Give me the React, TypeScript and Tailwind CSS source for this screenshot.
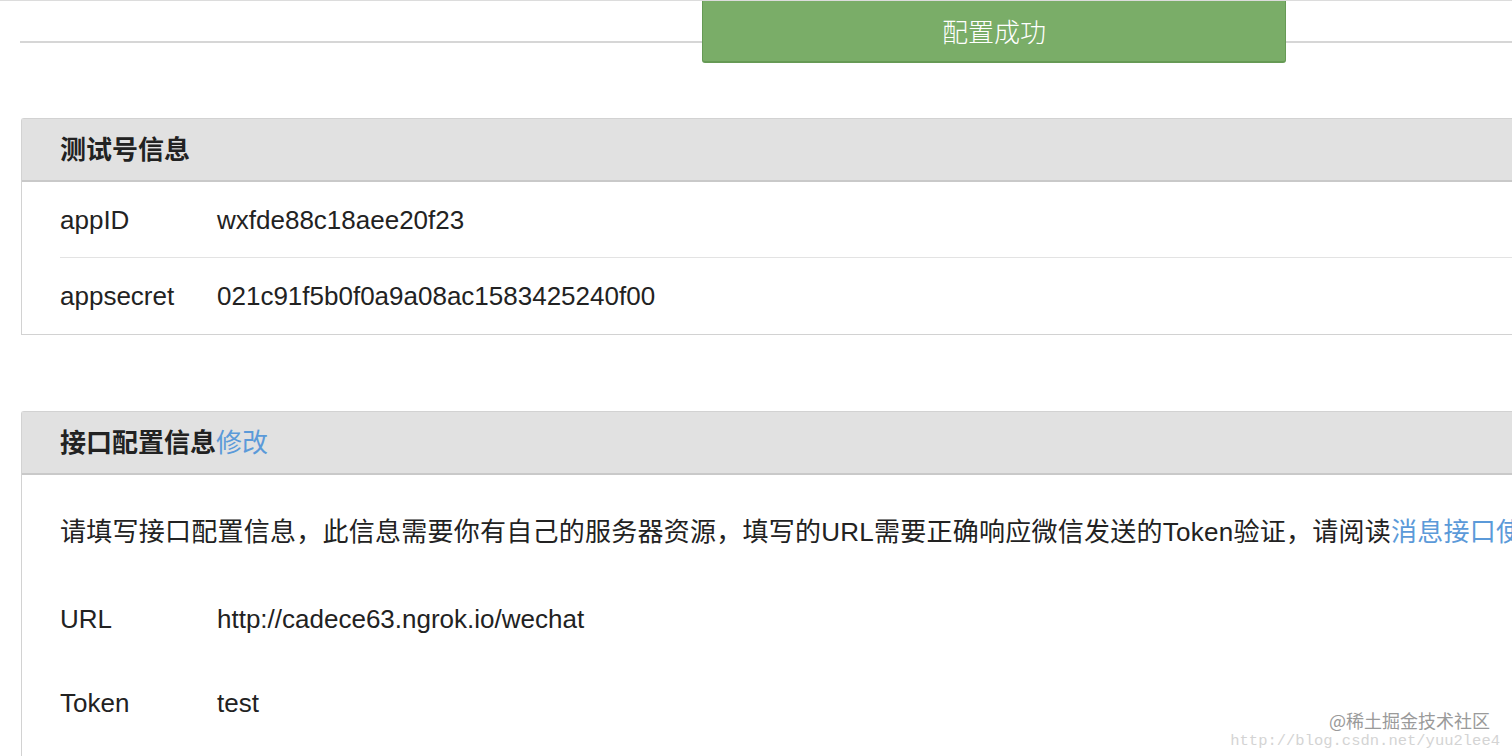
import React from 'react';

const FONT = "font-['Liberation_Sans','Noto_Sans_CJK_SC',sans-serif]";

interface FieldRowProps {
  label: string;
  value: string;
}

function FieldRow({ label, value }: FieldRowProps) {
  return (
    <div className="flex items-center h-[40px] leading-[40px]">
      <div className="w-[157px] shrink-0">{label}</div>
      <div>{value}</div>
    </div>
  );
}

export default function App() {
  return (
    <div className={`relative w-[1512px] h-[756px] overflow-hidden bg-white text-[26px] text-[#222] ${FONT}`}>
      {/* top rule */}
      <div className="border-t border-[#dcdcdc]" />
      <div className="ml-[20px] h-[42px] border-b-2 border-[#d6d6d6]" />

      {/* 测试号信息 */}
      <div className="ml-[21px] mt-[75px] w-[1520px] border border-r-0 border-[#d2d2d2] rounded-tl-[3px]">
        <div className="h-[63px] bg-[#e1e1e1] border-b-2 border-[#c9c9c9] pl-[38px] pt-[1px] flex items-center font-bold">
          测试号信息
        </div>
        <div className="pl-[38px]">
          <div className="h-[76px] flex items-center border-b border-[#e3e3e3]">
            <FieldRow label="appID" value="wxfde88c18aee20f23" />
          </div>
          <div className="h-[76px] flex items-center">
            <FieldRow label="appsecret" value="021c91f5b0f0a9a08ac1583425240f00" />
          </div>
        </div>
      </div>

      {/* 接口配置信息 */}
      <div className="ml-[21px] mt-[76px] w-[1520px] min-h-[400px] border border-r-0 border-b-0 border-[#d2d2d2] rounded-tl-[3px]">
        <div className="h-[63px] bg-[#e1e1e1] border-b-2 border-[#c9c9c9] pl-[38px] pt-[1px] flex items-center">
          <span className="font-bold">接口配置信息</span>
          <span className="text-[#5b9ad9]">修改</span>
        </div>
        <div className="pl-[38px] pt-[37px]">
          <div className="h-[40px] leading-[40px] whitespace-nowrap tracking-[0.25px]">
            请填写接口配置信息，此信息需要你有自己的服务器资源，填写的URL需要正确响应微信发送的Token验证，请阅读
            <span className="text-[#5b9ad9]">消息接口使用指南</span>
          </div>
          <div className="mt-[47px]">
            <FieldRow label="URL" value="http://cadece63.ngrok.io/wechat" />
          </div>
          <div className="mt-[44px]">
            <FieldRow label="Token" value="test" />
          </div>
        </div>
      </div>

      {/* success toast */}
      <div className="absolute left-[702px] top-[1px] w-[584px] h-[62px] bg-[#7aad68] border border-t-0 border-b-2 border-[#669a55] rounded-b-[3px] flex items-center justify-center pb-[1px] text-white text-[26px] font-['Noto_Sans_CJK_SC',sans-serif] font-light">
        配置成功
      </div>

      {/* watermarks */}
      <div className="absolute right-[22px] top-[709px] text-[18px] leading-[22px] text-[#9a9a9a] font-['Noto_Sans_CJK_SC',sans-serif]">
        @稀土掘金技术社区
      </div>
      <div className="absolute right-[12px] top-[731px] text-[15.5px] leading-[20px] text-[#d4d4d4] font-['Liberation_Mono',monospace]">
        http://blog.csdn.net/yuu2lee4
      </div>
    </div>
  );
}
